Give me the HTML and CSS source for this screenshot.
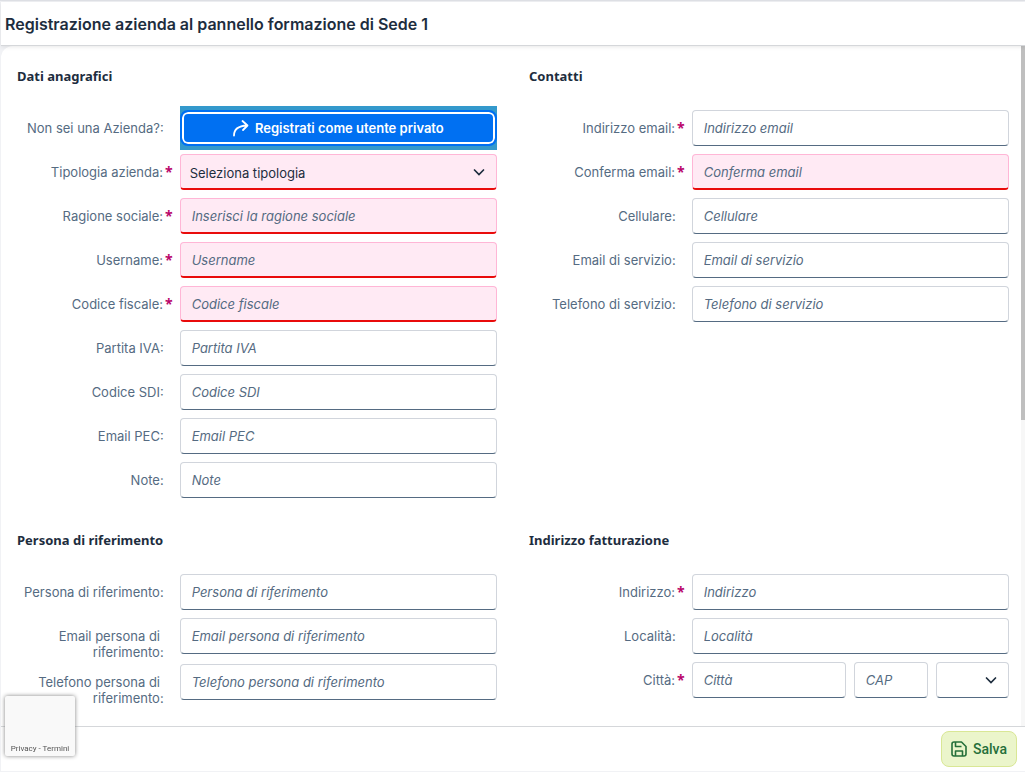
FILE: index.html
```html
<!DOCTYPE html>
<html lang="it">
<head>
<meta charset="utf-8">
<title>Registrazione azienda</title>
<link rel="stylesheet" href="styles.css">
</head>
<body>
<form class="page">
  <header class="bar"><h1>Registrazione azienda al pannello formazione di Sede 1</h1></header>
  <div class="scroller">
    <main class="content">
      <section class="group">
        <h2>Dati anagrafici</h2>
        <div class="row"><span class="label">Non sei una Azienda?:</span>
          <div class="field focus-cell"><button type="button" class="primary"><svg width="16" height="18" viewBox="0 0 16 18" fill="none" stroke="currentColor" stroke-width="1.800" stroke-linecap="round" stroke-linejoin="round"><path d="M1 16.500C1 10.500 5 7 14 6.500M9.500 2L14.500 6.500L10 11"/></svg>Registrati come utente privato</button></div></div>
        <div class="row"><label class="label required" for="tipo">Tipologia azienda:</label><div class="field"><div class="select error"><select id="tipo"><option>Seleziona tipologia</option></select><svg width="12" height="8" viewBox="0 0 12 8"><path d="M1.500 2L6 6.500L10.500 2"/></svg></div></div></div>
        <div class="row"><label class="label required" for="ragione">Ragione sociale:</label><div class="field"><input class="error" id="ragione" placeholder="Inserisci la ragione sociale"></div></div>
        <div class="row"><label class="label required" for="user">Username:</label><div class="field"><input class="error" id="user" placeholder="Username"></div></div>
        <div class="row"><label class="label required" for="cf">Codice fiscale:</label><div class="field"><input class="error" id="cf" placeholder="Codice fiscale"></div></div>
        <div class="row"><label class="label" for="iva">Partita IVA:</label><div class="field"><input id="iva" placeholder="Partita IVA"></div></div>
        <div class="row"><label class="label" for="sdi">Codice SDI:</label><div class="field"><input id="sdi" placeholder="Codice SDI"></div></div>
        <div class="row"><label class="label" for="pec">Email PEC:</label><div class="field"><input id="pec" placeholder="Email PEC"></div></div>
        <div class="row"><label class="label" for="note">Note:</label><div class="field"><input id="note" placeholder="Note"></div></div>
      </section>
      <section class="group">
        <h2>Contatti</h2>
        <div class="row"><label class="label required" for="email">Indirizzo email:</label><div class="field"><input id="email" type="email" placeholder="Indirizzo email"></div></div>
        <div class="row"><label class="label required" for="email2">Conferma email:</label><div class="field"><input class="error" id="email2" type="email" placeholder="Conferma email"></div></div>
        <div class="row"><label class="label" for="cell">Cellulare:</label><div class="field"><input id="cell" type="tel" placeholder="Cellulare"></div></div>
        <div class="row"><label class="label" for="eserv">Email di servizio:</label><div class="field"><input id="eserv" type="email" placeholder="Email di servizio"></div></div>
        <div class="row"><label class="label" for="tserv">Telefono di servizio:</label><div class="field"><input id="tserv" type="tel" placeholder="Telefono di servizio"></div></div>
      </section>
      <section class="group">
        <h2>Persona di riferimento</h2>
        <div class="row"><label class="label" for="pers">Persona di riferimento:</label><div class="field"><input id="pers" placeholder="Persona di riferimento"></div></div>
        <div class="row"><label class="label" for="epers">Email persona di&nbsp;<br>riferimento:</label><div class="field"><input id="epers" type="email" placeholder="Email persona di riferimento"></div></div>
        <div class="row"><label class="label" for="tpers">Telefono persona di&nbsp;<br>riferimento:</label><div class="field"><input id="tpers" type="tel" placeholder="Telefono persona di riferimento"></div></div>
      </section>
      <section class="group">
        <h2>Indirizzo fatturazione</h2>
        <div class="row"><label class="label required" for="ind">Indirizzo:</label><div class="field"><input id="ind" placeholder="Indirizzo"></div></div>
        <div class="row"><label class="label" for="loc">Località:</label><div class="field"><input id="loc" placeholder="Località"></div></div>
        <div class="row"><label class="label required" for="citta">Città:</label><div class="field city"><input id="citta" placeholder="Città"><input aria-label="CAP" placeholder="CAP"><div class="select"><select aria-label="Provincia"><option></option></select><svg width="12" height="8" viewBox="0 0 12 8"><path d="M1.500 2L6 6.500L10.500 2"/></svg></div></div></div>
      </section>
    </main>
    <div class="track"><div class="thumb"></div></div>
  </div>
  <footer class="footer"><button type="submit" class="save"><svg width="16" height="16" viewBox="0 0 16 16" fill="none" stroke="currentColor" stroke-width="1.600" stroke-linejoin="round"><path d="M3 1H10.500L15 5.500V13Q15 15 13 15H3Q1 15 1 13V3Q1 1 3 1ZM4.500 1V5.500H10.500M4.500 15V10H11.500V15"/></svg>Salva</button></footer>
</form>
<aside class="captcha"><a href="#">Privacy</a> - <a href="#">Termini</a></aside>
</body>
</html>
```
FILE: styles.css
```css
* { box-sizing: border-box; }
body {
  margin: 0;
  background: #f1f2f5;
  color: #1d2d3e;
  font: 13px/16px Inter, sans-serif;
}
button, input, select { font: inherit; color: inherit; }
.page {
  display: flex;
  flex-direction: column;
  height: 100vh;
  padding: 1px 0 1px 1px;
  border-top: 1px solid #dfe1e6;
}
.bar {
  flex: none;
  height: 44px;
  display: flex;
  align-items: center;
  padding: 0 4px;
  background: #fff;
  border-bottom: 1px solid #d5d7da;
  box-shadow: 0 1px 4px #00000018;
  position: relative;
}
h1 { margin: 0; font-size: 16px; line-height: 20px; font-weight: 600; }
.scroller { flex: 1; min-height: 0; display: flex; overflow: hidden; background: #fff; border-top-left-radius: 12px; }
.content {
  flex: 1;
  display: grid;
  grid-template-columns: 1fr 1fr;
  column-gap: 32px;
  align-content: start;
  padding: 20px 12px 0 16px;
}
.group { min-width: 0; padding-bottom: 28px; }
h2 { margin: 0 0 20px; font: 700 13px/20px "Noto Sans", sans-serif; }
.row {
  display: grid;
  grid-template-columns: minmax(0, 1fr) minmax(0, 2fr);
  column-gap: 4px;
  min-height: 44px;
}
.label { padding: 14px 12px 0 0; color: #556b82; text-align: right; white-space: nowrap; }
.required { padding-right: 3px; }
.required::after { content: "*"; color: #ba066c; font: 700 14px/12px "Noto Sans", sans-serif; margin-left: 2px; }
.field { padding: 4px 0; align-self: start; }
.focus-cell { background: #3399cc; }
.primary {
  display: flex;
  align-items: center;
  justify-content: center;
  gap: 6px;
  width: 100%;
  height: 36px;
  border: 2px solid #0070f2;
  border-radius: 8px;
  background: #0070f2;
  box-shadow: inset 0 0 0 2px #fff;
  color: #fff;
  font-weight: 600;
}
input, .select {
  display: block;
  width: 100%;
  min-width: 0;
  height: 36px;
  border: 1px solid #d1d5dc;
  border-bottom-color: #556b82;
  border-radius: 4px;
  background: #fff;
}
input { padding: 0 11px; }
input::placeholder { color: #556b82; font-style: italic; opacity: 1; }
.error { background: #ffeaf4; border-color: #ffb6d6; border-bottom: 2px solid #e90b0b; }
.select { display: flex; align-items: center; padding-right: 11px; }
select { flex: 1; min-width: 0; height: 100%; padding: 2px 9px 0; border: 0; background: none; appearance: none; }
.select svg { flex: none; fill: none; stroke: #1d2d3e; stroke-width: 1.7; stroke-linecap: round; }
.city { display: grid; grid-template-columns: 154fr 74fr 73fr; gap: 8px; }
.track { flex: none; width: 4px; background: #f7f7f7; }
.thumb { height: 55%; background: #bfbfbf; }
.footer {
  flex: none;
  height: 45px;
  display: flex;
  justify-content: flex-end;
  align-items: center;
  padding: 0 8px;
  border-top: 1px solid #d5d7da;
  background: #fff;
}
.save {
  display: flex;
  align-items: center;
  gap: 6px;
  height: 36px;
  padding: 0 9px;
  border: 1px solid #d9e795;
  border-radius: 8px;
  background: #ebf5cb;
  color: #256f3a;
  font: 500 14px/16px Roboto, sans-serif;
}
.captcha {
  position: fixed;
  left: 5px;
  bottom: 16px;
  width: 70px;
  height: 60px;
  padding-top: 47px;
  border-radius: 2px;
  background: #f9f9f9;
  box-shadow: 0 0 4px #808080;
  color: #555;
  font: 8px/12px Roboto, sans-serif;
  text-align: center;
}
.captcha a { color: inherit; text-decoration: none; }
```
